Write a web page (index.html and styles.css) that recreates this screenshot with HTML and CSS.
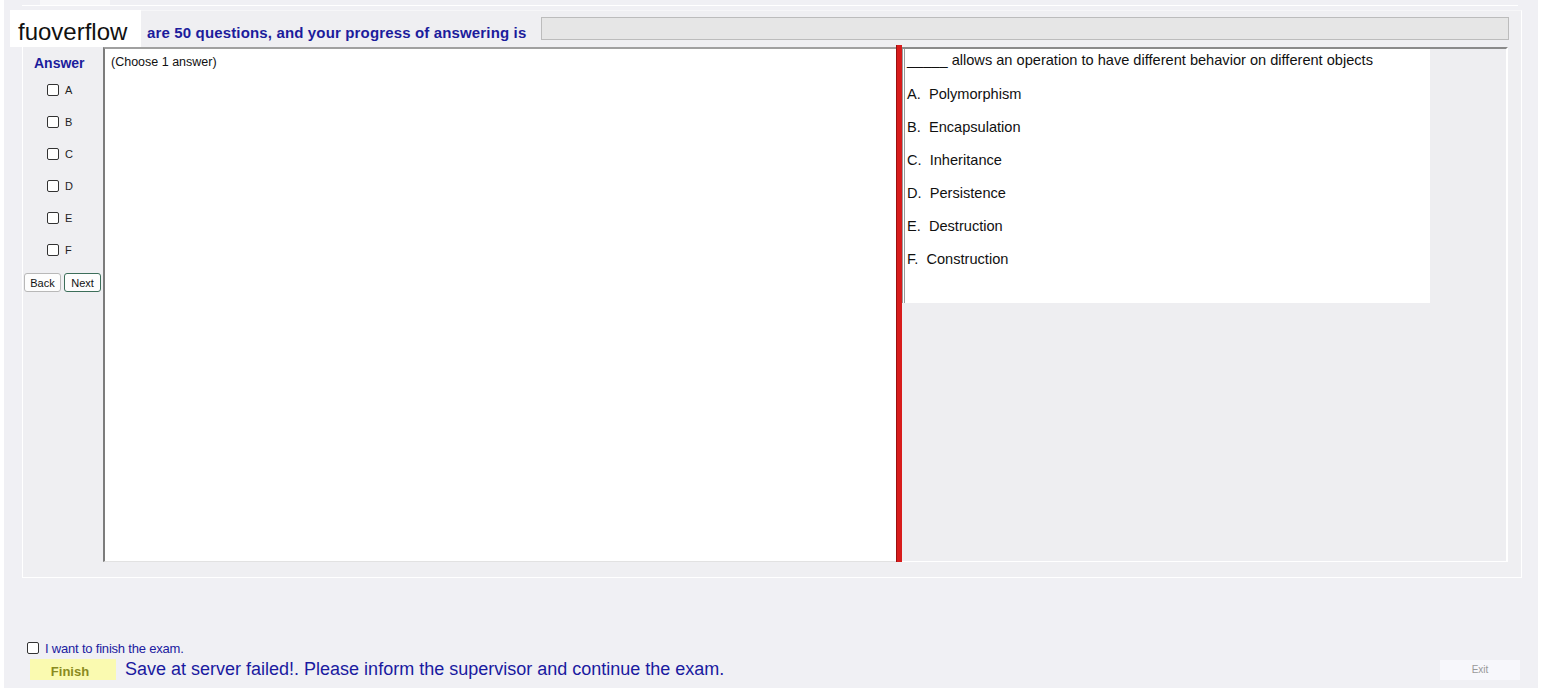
FILE: index.html
```html
<!DOCTYPE html>
<html lang="en">
<head>
    <meta charset="UTF-8">
    <title>Exam</title>
    <link rel="stylesheet" href="styles.css">
</head>
<body>
    <div class="window">
        <div class="tabs"><span class="tab"></span></div>
        <div class="panel">
            <div class="head">
                <div class="title">are 50 questions, and your progress of answering is</div>
                <div class="progress"></div>
            </div>
            <div class="main">
                <div class="answers">
                    <div class="answer-title">Answer</div>
                    <label class="opt"><input type="checkbox"> A</label>
                    <label class="opt"><input type="checkbox"> B</label>
                    <label class="opt"><input type="checkbox"> C</label>
                    <label class="opt"><input type="checkbox"> D</label>
                    <label class="opt"><input type="checkbox"> E</label>
                    <label class="opt"><input type="checkbox"> F</label>
                    <div class="nav">
                        <button class="btn">Back</button>
                        <button class="btn btn-focus">Next</button>
                    </div>
                </div>
                <div class="question-box">(Choose 1 answer)</div>
                <div class="splitter"></div>
                <div class="content">
                    <div class="content-box">
                        <div class="q">_____ allows an operation to have different behavior on different objects</div>
                        <div class="choices">
                            <div>A.&nbsp; Polymorphism</div>
                            <div>B.&nbsp; Encapsulation</div>
                            <div>C.&nbsp; Inheritance</div>
                            <div>D.&nbsp; Persistence</div>
                            <div>E.&nbsp; Destruction</div>
                            <div>F.&nbsp; Construction</div>
                        </div>
                    </div>
                </div>
            </div>
        </div>
        <label class="finish-check"><input type="checkbox"> I want to finish the exam.</label>
        <div class="footer">
            <button class="finish">Finish</button>
            <span class="message">Save at server failed!. Please inform the supervisor and continue the exam.</span>
            <button class="exit">Exit</button>
        </div>
    </div>
    <div class="watermark">fuoverflow</div>
</body>
</html>
```

FILE: styles.css
```css
body {
    margin: 0;
    background-color: #fff;
    font-family: "Liberation Sans", Arial, sans-serif;
    position: relative;
}
.window {
    margin: 0 4px;
    width: 1534px;
    height: 688px;
    background-color: #f0f0f4;
    padding: 0 18px;
    box-sizing: border-box;
}
.tabs {
    height: 5px;
    border-bottom: 1px solid #fff;
    margin-right: 2px;
}
.tab {
    display: block;
    margin-left: 18px;
    width: 70px;
    height: 5px;
    background-color: #f7f7f9;
}
.panel {
    margin-top: 4px;
    width: 1500px;
    height: 568px;
    box-sizing: border-box;
    border: 1px solid #fff;
    border-top-color: #f6f6f8;
    background-color: #efeff2;
}
.head {
    height: 36px;
    display: flex;
    align-items: center;
}
.title {
    margin-left: 124px;
    padding-top: 7px;
    font-size: 15px;
    font-weight: bold;
    letter-spacing: 0.15px;
    color: #1c1c9c;
}
.progress {
    margin-left: auto;
    margin-right: 12px;
    width: 968px;
    height: 23px;
    margin-top: -2px;
    box-sizing: border-box;
    background-color: #e6e6e6;
    border: 1px solid #bcbcbc;
}
.main {
    display: flex;
    height: 515px;
}
.answers {
    width: 80px;
    padding-left: 1px;
    box-sizing: border-box;
}
.answer-title {
    margin: 8px 0 3px 10px;
    height: 16px;
    line-height: 16px;
    font-size: 14px;
    font-weight: bold;
    color: #1c1c9c;
}
.opt {
    display: flex;
    align-items: center;
    height: 32px;
    padding-left: 23px;
    font-size: 11px;
    color: #222;
}
.opt input, .finish-check input {
    appearance: none;
    margin: 0 6px 0 0;
    width: 12px;
    height: 12px;
    border: 1px solid #333;
    border-radius: 2px;
    background-color: #fff;
}
.nav {
    display: flex;
    gap: 3px;
    margin-top: 7px;
}
.btn {
    width: 37px;
    height: 19px;
    padding: 0;
    font-family: "Liberation Sans", Arial, sans-serif;
    font-size: 11px;
    color: #111;
    background-color: #fdfdfd;
    border: 1px solid #b8b8b8;
    border-radius: 3px;
}
.btn-focus {
    border-color: #3c6e5a;
}
.question-box {
    width: 793px;
    background-color: #fff;
    border-top: 2px solid #a0a0a0;
    border-left: 2px solid #7c7c7c;
    border-bottom: 1px solid #e2e2e2;
    box-sizing: border-box;
    padding: 6px 6px;
    font-size: 12.5px;
    color: #111;
}
.splitter {
    width: 6px;
    margin-top: -2px;
    background-color: #d81c1c;
    border-left: 1px solid #9a1010;
    box-sizing: border-box;
}
.content {
    flex: 1;
    margin-right: 13px;
    border-top: 2px solid #8a8a8a;
    border-right: 2px solid #fff;
    border-bottom: 1px solid #fff;
    background-color: #eeeef1;
}
.content-box {
    width: 528px;
    height: 254px;
    box-sizing: border-box;
    background-color: #fff;
    border-left: 3px double #9a9a9a;
    padding-left: 2px;
    font-size: 14.6px;
    color: #111;
}
.q {
    height: 22px;
    line-height: 22px;
}
.choices {
    padding-top: 7px;
    line-height: 33px;
}
.finish-check {
    display: flex;
    align-items: center;
    margin: 64px 0 0 5px;
    height: 13px;
    font-family: "Liberation Sans Narrow", "Liberation Sans", Arial, sans-serif;
    font-size: 13px;
    letter-spacing: -0.2px;
    color: #2020a0;
}
.finish-check input {
    margin-top: -2px;
}
.footer {
    display: flex;
    align-items: center;
    margin-top: 4px;
    height: 21px;
}
.finish {
    margin-left: 8px;
    width: 86px;
    height: 21px;
    border: none;
    background-color: #fafab0;
    font-family: "Liberation Sans", Arial, sans-serif;
    font-size: 13px;
    font-weight: bold;
    color: #8a8a20;
    padding: 3px 6px 0 0;
}
.message {
    margin-left: 9px;
    font-size: 18px;
    color: #1a1aa0;
}
.exit {
    margin-left: auto;
    width: 80px;
    height: 20px;
    border: none;
    background-color: #f7f7fb;
    font-family: "Liberation Sans", Arial, sans-serif;
    font-size: 10px;
    color: #999;
}
.watermark {
    position: absolute;
    left: 10px;
    top: 10px;
    width: 131px;
    height: 37px;
    box-sizing: border-box;
    padding-left: 8px;
    line-height: 44px;
    background-color: #fff;
    font-size: 24px;
    color: #111;
}
```
